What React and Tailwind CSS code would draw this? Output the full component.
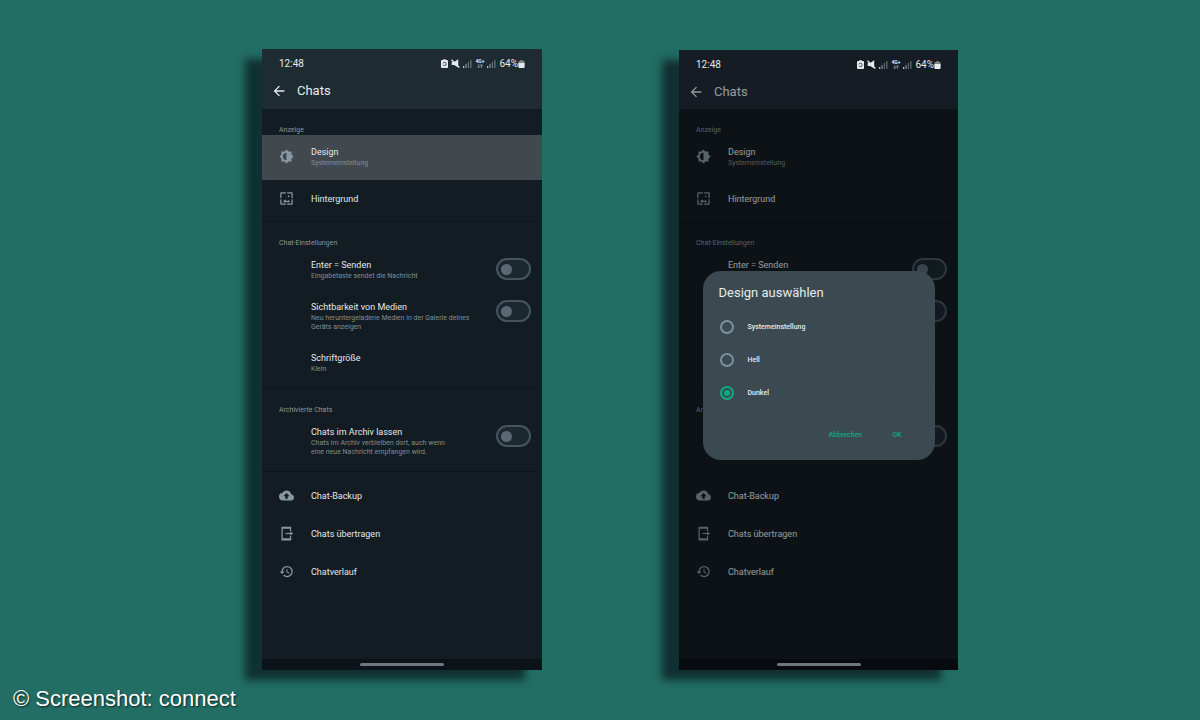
import { useState, useId } from 'react';
import { clsx } from 'clsx';
import {
  MdArrowBack,
  MdBackup,
  MdBrightness6,
  MdHistory,
  MdWallpaper,
} from 'react-icons/md';

const THEMES = ['Systemeinstellung', 'Hell', 'Dunkel'];

const Signal = () => (
  <svg viewBox="0 0 9 9" className="w-[9px] h-[9px]" fill="currentColor">
    <rect x="0" y="7" width="1.3" height="2" opacity="0.8" />
    <rect x="2.4" y="5" width="1.3" height="4" opacity="0.5" />
    <rect x="4.8" y="3" width="1.3" height="6" opacity="0.35" />
    <rect x="7.2" y="1" width="1.3" height="8" opacity="0.35" />
  </svg>
);

const TransferIcon = ({ className }) => (
  <svg viewBox="0 0 24 24" className={className} fill="none" stroke="currentColor" strokeWidth="2">
    <path d="M18.500 8V2H5v20h13.500v-6" />
    <path d="M5 3h13.500M5 21h13.500" strokeWidth="3" />
    <path d="M10.500 12H21" />
    <path d="M18 8.500l4.500 3.500-4.500 3.500z" fill="currentColor" stroke="none" />
  </svg>
);

function StatusBar() {
  return (
    <div className="h-[29px] px-[17px] flex items-center justify-between text-[10px] text-[#e6eaec]">
      <span>12:48</span>
      <div className="flex items-center gap-[3px]">
        <svg viewBox="0 0 8 10" className="w-[7px] h-[9px]">
          <path d="M2.5 0h3v1H7c.6 0 1 .4 1 1v7c0 .6-.4 1-1 1H1c-.6 0-1-.4-1-1V2c0-.6.4-1 1-1h1.500z" fill="currentColor" />
          <circle cx="4" cy="5.500" r="1.900" fill="none" stroke="#1f2b32" strokeWidth="1" strokeDasharray="4.500 1.500" />
        </svg>
        <svg viewBox="0 0 10 10" className="w-[9px] h-[9px]">
          <path d="M.8 3.200h2.700L8 .3v9.200L3.500 6.800H.8z" fill="currentColor" />
          <path d="M.5.800l8.800 8.600" stroke="currentColor" strokeWidth="1.400" />
        </svg>
        <Signal />
        <div className="w-[9px] h-[9px] flex flex-col items-center">
          <span className="text-[5px] leading-[5px] font-bold">4G+</span>
          <svg viewBox="0 0 6 4" className="w-1.5 h-1" fill="none" stroke="currentColor" strokeWidth="0.7" opacity="0.7">
            <path d="M1.800 0v3.500M.6 2.300l1.200 1.300L3 2.300M4.400 4V.4M3.200 1.700L4.400.4l1.200 1.300" />
          </svg>
        </div>
        <Signal />
        <div className="flex items-center">
          <span>64%</span>
          <svg viewBox="0 0 7 9" className="w-[7px] h-2" fill="currentColor">
            <path d="M2.200 0h2.600v1.200H6c.5 0 1 .4 1 1V4H0V2.200c0-.6.5-1 1-1h1.200z" opacity="0.5" />
            <path d="M0 3.500h7V8c0 .6-.4 1-1 1H1c-.6 0-1-.4-1-1z" />
          </svg>
        </div>
      </div>
    </div>
  );
}

function Text({ title, note }) {
  return (
    <span className="flex-1 flex flex-col pt-px text-left">
      <span className="text-[9px] leading-3 text-[#e3e8ea]">{title}</span>
      {note && <span className="mt-px text-[7px] leading-[9px] whitespace-pre-line text-[#7f8d95]">{note}</span>}
    </span>
  );
}

function LinkRow({ icon: Icon, title, note, iconClass, className }) {
  return (
    <button type="button" className={clsx('w-full flex items-center gap-[17px] pl-[17px] pr-[11px]', className)}>
      {Icon ? <Icon className={clsx('w-[15px] h-[15px] text-[#8698a2]', iconClass)} /> : <span className="w-[15px]" />}
      <Text title={title} note={note} />
    </button>
  );
}

function ToggleRow({ title, note }) {
  const id = useId();
  return (
    <label htmlFor={id} className="flex items-start pl-[49px] pr-[11px] pt-2.5 pb-[9px]">
      <Text title={title} note={note} />
      <input
        id={id}
        type="checkbox"
        role="switch"
        className="appearance-none shrink-0 w-[35px] h-[22px] rounded-full border-2 border-[#46555d] bg-[#1b2830] flex items-center px-[3px] before:w-[11px] before:h-[11px] before:rounded-full before:bg-[#5a6973] checked:justify-end"
      />
    </label>
  );
}

function Section({ label, className, children }) {
  return (
    <section className={clsx('pb-[5px]', className)}>
      <h2 className="h-[26px] pl-[17px] flex items-end text-[7px] leading-[9px] text-[#8a979e]">{label}</h2>
      {children}
    </section>
  );
}

function ChatSettings({ dimmed }) {
  return (
    <>
      <header className={clsx('pt-[30px]', dimmed ? 'h-[59px] bg-[#232b37]' : 'h-[60px] bg-[#1f2b32]')}>
        <div className="h-6 pl-[9px] flex items-center gap-2.5 text-[#e6eaec]">
          <button type="button" aria-label="Zurück">
            <MdArrowBack className="w-4 h-4" />
          </button>
          <h1 className="text-[13px] leading-4">Chats</h1>
        </div>
      </header>
      <Section label="Anzeige">
        <LinkRow
          icon={MdBrightness6}
          iconClass="-scale-x-100"
          title="Design"
          note="Systemeinstellung"
          className={clsx('pt-2.5 pb-3', !dimmed && 'bg-[#42494e]')}
        />
        <LinkRow icon={MdWallpaper} title="Hintergrund" className="h-9" />
      </Section>
      <Section label="Chat-Einstellungen" className="border-t border-[#0f171d]">
        <ToggleRow title="Enter = Senden" note="Eingabetaste sendet die Nachricht" />
        <ToggleRow
          title="Sichtbarkeit von Medien"
          note={'Neu heruntergeladene Medien in der Galerie deines\nGeräts anzeigen'}
        />
        <LinkRow title="Schriftgröße" note="Klein" className="pt-2.5 pb-[9px]" />
      </Section>
      <Section label="Archivierte Chats" className="border-t border-[#0f171d]">
        <ToggleRow
          title="Chats im Archiv lassen"
          note={'Chats im Archiv verbleiben dort, auch wenn\neine neue Nachricht empfangen wird.'}
        />
      </Section>
      <section className="border-t border-[#0f171d] pt-1 pb-[69px]">
        <LinkRow icon={MdBackup} title="Chat-Backup" className="h-[38px]" />
        <LinkRow icon={TransferIcon} title="Chats übertragen" className="h-[38px]" />
        <LinkRow icon={MdHistory} title="Chatverlauf" className="h-[38px]" />
      </section>
    </>
  );
}

function ThemeDialog() {
  const [theme, setTheme] = useState('Dunkel');

  return (
    <div className="absolute inset-0 z-10 bg-black/35 flex items-center justify-center pt-[11px]">
      <div role="dialog" aria-label="Design auswählen" className="w-[232px] rounded-[18px] bg-[#3b4a50] px-4 pt-3.5 pb-[19px] text-[#e6eaec]">
        <h2 className="text-[13px] leading-4">Design auswählen</h2>
        <div className="mt-2.5 pl-px flex flex-col gap-px">
          {THEMES.map((name) => (
            <label key={name} className="h-8 flex items-center gap-3.5 text-[7px] font-medium">
              <input
                type="radio"
                name="theme"
                checked={theme === name}
                onChange={() => setTheme(name)}
                className="appearance-none w-3.5 h-3.5 rounded-full border-2 border-[#7d919c] flex items-center justify-center checked:border-[#0bab84] before:w-1.5 before:h-1.5 before:rounded-full checked:before:bg-[#0bab84]"
              />
              {name}
            </label>
          ))}
        </div>
        <div className="mt-5 pr-[17px] flex justify-end gap-[30px] text-[7px] leading-3 font-medium text-[#0bab84]">
          <button type="button">Abbrechen</button>
          <button type="button">OK</button>
        </div>
      </div>
    </div>
  );
}

function Phone({ dialog, className }) {
  return (
    <div className={clsx('relative shrink-0 bg-[#131c23] shadow-[-17px_10px_8px_rgba(13,32,36,0.8)]', className)}>
      {/* stays bright above the dialog scrim */}
      <div className="absolute inset-x-0 top-0 z-20">
        <StatusBar />
      </div>
      <ChatSettings dimmed={dialog} />
      <div className="h-[11px] flex items-center justify-center bg-[#0b1218]">
        <div className="relative z-20 w-[84px] h-[3px] rounded-full bg-[#70767e]" />
      </div>
      {dialog && <ThemeDialog />}
    </div>
  );
}

export default function App() {
  return (
    <div className="min-h-screen bg-[#226e64] font-['Roboto',sans-serif] flex flex-col">
      <main className="flex-1 flex items-start justify-center gap-[137px] pt-[49px] pl-5">
        <Phone className="w-[280px]" />
        <Phone dialog className="w-[279px] mt-px" />
      </main>
      <footer className="h-[49px] pl-[13px] pt-3 text-[22px] leading-8 text-white font-['Liberation_Sans',sans-serif] [text-shadow:1px_1px_2px_rgba(0,0,0,0.7)]">
        © Screenshot: connect
      </footer>
    </div>
  );
}
